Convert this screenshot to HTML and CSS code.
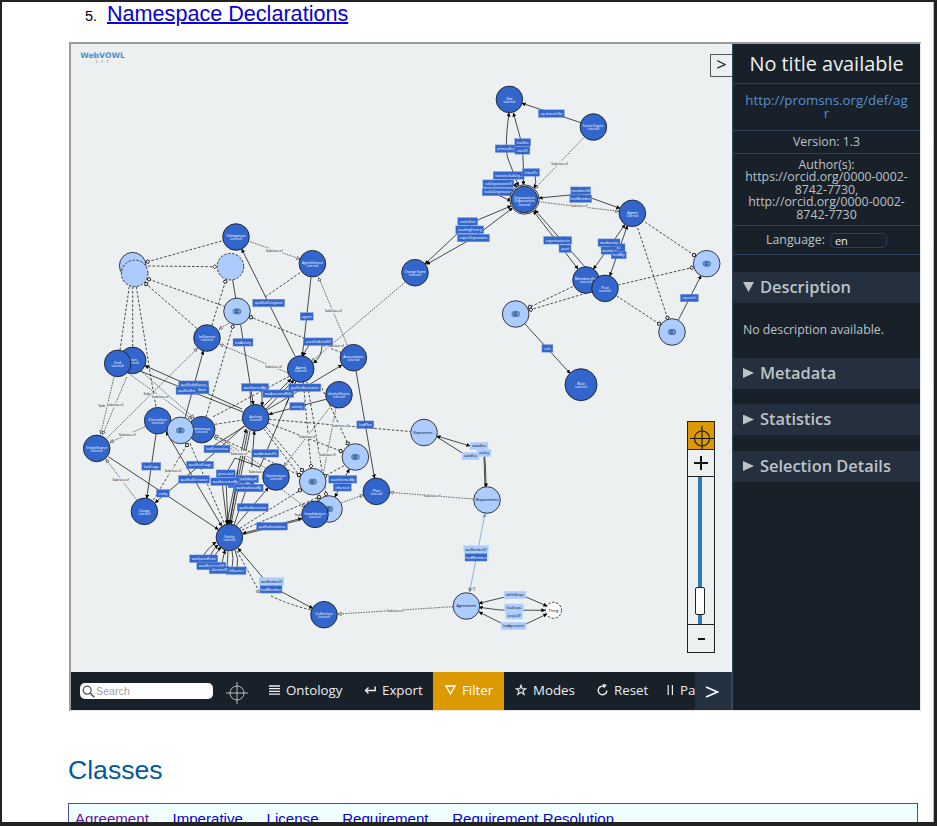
FILE: index.html
```html
<!DOCTYPE html>
<html lang="en">
<head>
<meta charset="utf-8">
<title>Agreements Ontology</title>
<link rel="stylesheet" href="styles.css">
</head>
<body>
<main class="page">
  <div class="toc"><span>5.</span><a href="#ns">Namespace Declarations</a></div>
  <div class="frame">
    <div class="left">
      <section class="canvas">
        <svg id="graph" class="graph" viewBox="71 44 662 628" width="662" height="628"></svg>
        <div class="logo"><b>WebVOWL</b><small>1.1.7</small></div>
        <button class="collapse">&gt;</button>
        <div class="zoom">
          <div class="center"><svg width="27" height="28" viewBox="0 0 27 28"><g fill="none" stroke="#111" stroke-width="1.1"><circle cx="15" cy="16.5" r="7.5"/><path d="M15 4V28M3 16.5H27"/></g></svg></div>
          <div class="step"><svg width="14" height="14" viewBox="0 0 14 14"><path d="M7 0V14M0 7H14" stroke="#111" stroke-width="2"/></svg></div>
          <div class="track"><i class="thumb"></i></div>
          <div class="step last"><svg width="14" height="14" viewBox="0 0 14 14"><path d="M4 7H11" stroke="#111" stroke-width="2"/></svg></div>
        </div>
      </section>
      <nav class="menu">
        <div class="search"><svg width="13" height="13" viewBox="0 0 13 13"><g fill="none" stroke="#555" stroke-width="1.2"><circle cx="5.2" cy="5.2" r="4"/><path d="M8.2 8.2L12.3 12.3" stroke-width="1.6"/></g></svg><span>Search</span></div>
        <svg class="cross" width="22" height="22" viewBox="0 0 22 22"><g fill="none" stroke="#b9bdc1" stroke-width="1"><circle cx="11" cy="11" r="7"/><path d="M11 0V22M0 11H22"/></g></svg>
        <a class="item ontology"><svg width="11" height="10" viewBox="0 0 11 10"><path d="M0 1H11M0 3.7H11M0 6.4H11M0 9.1H11" stroke="#eee" stroke-width="1.3"/></svg>Ontology</a>
        <a class="item export"><svg width="12" height="10" viewBox="0 0 12 10"><path d="M11.2 1.5V5.5H1.5M4.5 2.5L1.5 5.5L4.5 8.5" fill="none" stroke="#eee" stroke-width="1.4"/></svg>Export</a>
        <a class="item filter"><svg width="11" height="10" viewBox="0 0 11 10"><path d="M1 1H10L5.5 8.8Z" fill="none" stroke="#fff" stroke-width="1.4"/></svg>Filter</a>
        <a class="item modes"><svg width="12" height="12" viewBox="0 0 12 12"><path d="M6 1.2L7.2 4.7H10.9L8 6.9L9.1 10.5L6 8.4L2.9 10.5L4 6.9L1.1 4.7H4.8Z" fill="none" stroke="#eee" stroke-width="1.1"/></svg>Modes</a>
        <a class="item reset"><svg width="11" height="12" viewBox="0 0 11 12"><path d="M6.5 2.3A4.3 4.3 0 1 0 9.8 6.4" fill="none" stroke="#eee" stroke-width="1.4"/><path d="M5.4 0L9.8 .8L7 4.6Z" fill="#eee"/></svg>Reset</a>
        <a class="item pause"><svg width="7" height="10" viewBox="0 0 7 10"><path d="M1.2 0V10M5.4 0V10" stroke="#eee" stroke-width="1.2"/></svg>Pause</a>
        <a class="more"><svg width="14" height="14" viewBox="0 0 14 14"><path d="M1 2L12.5 7L1 12" fill="none" stroke="#fff" stroke-width="1.8"/></svg></a>
      </nav>
    </div>
    <aside class="side">
      <h1>No title available</h1>
      <div class="row iri"><a>http://promsns.org/def/ag<br>r</a></div>
      <div class="row version">Version: 1.3</div>
      <div class="row authors">Author(s):<br>https://orcid.org/0000-0002-<br>8742-7730,<br>http://orcid.org/0000-0002-<br>8742-7730</div>
      <div class="row language">Language:<span class="select">en</span></div>
      <h2 class="first"><i class="tri open"></i><span>Description</span></h2>
      <p>No description available.</p>
      <h2><i class="tri"></i><span>Metadata</span></h2>
      <h2><i class="tri"></i><span>Statistics</span></h2>
      <h2><i class="tri"></i><span>Selection Details</span></h2>
    </aside>
  </div>
  <h3 class="classes">Classes</h3>
  <div class="links"><a class="visited">Agreement</a><a>Imperative</a><a>License</a><a>Requirement</a><a>Requirement Resolution</a></div>
</main>
<script src="graph.js"></script>
</body>
</html>
```
FILE: styles.css
```css
* { box-sizing: border-box; }
body { margin: 0; background: #222; font-family: "Liberation Sans", sans-serif; }
.page { margin: 2px 0 0 2px; width: 932px; height: 820px; background: #fff; overflow: hidden; border-right: 1px solid #bbb; }
.toc { padding-left: 83px; height: 40px; display: flex; align-items: baseline; font-size: 14.5px; line-height: 24px; }
.toc span { width: 22px; }
.toc a { font-size: 21.6px; color: #0a00d4; text-decoration: underline; text-decoration-thickness: 1.5px; text-underline-offset: 1px; }
.frame { margin-left: 67px; width: 852px; height: 669px; display: flex; border: 2px solid; border-color: #9b9b9b #e8e8e8 #e8e8e8 #9b9b9b; border-right-width: 1px; border-bottom-width: 1px; font-family: "Open Sans", sans-serif; }
.left { flex: none; width: 661px; display: flex; flex-direction: column; overflow: hidden; }
.canvas { position: relative; height: 628px; background: #ecf0f1; }
.graph { display: block; }
.graph text { text-anchor: middle; font-family: "Open Sans", sans-serif; }
.logo { position: absolute; left: 9px; top: 7px; width: 45px; text-align: center; font-size: 7.7px; line-height: 9px; color: #4a90cc; letter-spacing: 0; font-family: "DejaVu Sans", sans-serif; }
.logo b, .logo small { display: block; }
.logo small { font-size: 4px; line-height: 4px; color: #888; letter-spacing: .8px; }
.collapse { position: absolute; right: 0; top: 10px; width: 22px; height: 23px; padding: 0 0 3px; border: 1px solid #555; border-right: 0; background: #ecf0f1; font: 18px/18px "Open Sans", sans-serif; color: #111; }
.zoom { position: absolute; left: 616px; top: 377px; width: 28px; height: 232px; border: 1px solid #222; border-width: 1px 1.5px; display: flex; flex-direction: column; }
.center { height: 28px; background: #dd9900; border-bottom: 1px solid #222; }
.center svg { display: block; overflow: visible; }
.center svg, .step svg { margin-left: -1px; }
.step { height: 27px; display: flex; align-items: center; justify-content: center; border-bottom: 1px solid #222; }
.step.last { border-top: 1px solid #222; border-bottom: 0; height: 28px; }
.track { position: relative; flex: 1; background: linear-gradient(#2f79b5, #2f79b5) 10px 0 / 4px 100% no-repeat; }
.thumb { position: absolute; left: 7px; top: 110px; width: 10px; height: 28px; border: 1px solid #222; border-radius: 2px; background: #fff; }
.menu { height: 38px; display: flex; align-items: center; background: #18202a; color: #eee; overflow: hidden; position: relative; }
.search { flex: none; width: 133px; height: 16px; margin-left: 9px; padding-left: 2px; border-radius: 5px; background: #fff; display: flex; align-items: center; gap: 1px; font: 10.7px "Liberation Sans", sans-serif; color: #a0a0a0; }
.cross { flex: none; margin: 3px 0 0 13px; }
.item { flex: none; height: 38px; display: flex; align-items: center; gap: 6px; padding-bottom: 2px; font-size: 13.3px; white-space: nowrap; }
.ontology { margin-left: 21px; width: 95px; }
.export { width: 69px; }
.filter { width: 71px; padding-left: 12px; background: #dd9900; color: #fff; }
.modes { width: 93px; padding-left: 11px; }
.reset { width: 70px; }
.more { position: absolute; right: 0; top: 0; width: 37px; height: 38px; background: #243140; border-right: 1px solid #34495e; padding: 10px 0 0 10px; }
.side { flex: 1; background: #18202a; color: #bdc3c7; font-size: 13.3px; border-left: 1px solid #34495e; min-width: 0; }
.side h1 { margin: 0; height: 40px; border-bottom: 1px solid #2c4058; font-size: 19.9px; line-height: 39px; font-weight: 400; text-align: center; color: #ecf0f1; }
.row { border-bottom: 1px solid #2c4058; text-align: center; line-height: 12.4px; }
.iri { height: 47px; padding-top: 10px; line-height: 13.4px; color: #5a90c8; }
.version { height: 23px; line-height: 22px; font-size: 12.35px; }
.authors { height: 72px; padding-top: 5px; font-size: 12.35px; }
.language { height: 29px; display: flex; align-items: center; justify-content: center; gap: 5px; font-size: 12.35px; }
.select { width: 57px; height: 15px; border: 1px solid #2c4058; border-radius: 5px; text-align: left; padding-left: 4px; font: 11px/13px "Open Sans", sans-serif; color: #ecf0f1; }
.side h2 { margin: 0 0 15.5px; height: 31px; background: #24303d; padding-left: 10px; display: flex; align-items: center; gap: 6px; font-size: 16.4px; font-weight: 600; }
.side h2 span { padding-bottom: 2px; }
.side h2.first { margin: 16.5px 0 0; }
.side p { margin: 0; height: 55px; padding-left: 10px; line-height: 54px; font-size: 12.3px; }
.tri { width: 11px; height: 10px; background: #bdc3c7; clip-path: polygon(0 0, 100% 50%, 0 100%); }
.tri.open { clip-path: polygon(0 0, 100% 0, 50% 100%); }
.classes { margin: 42px 0 0 66px; font-size: 26.6px; line-height: 34px; font-weight: 400; color: #005a9c; }
.links { margin: 16px 0 0 66px; width: 850px; height: 60px; border: 1px solid #4a4aa8; background: #f0ffff; display: flex; gap: 23.6px; padding: 6px 0 0 6px; font-size: 15.1px; line-height: 18px; color: #0a00c8; }
.visited { color: #6a0d9b; }
```
FILE: graph.js
```js
const out = [];
const marks = `<defs>
<marker id="a" viewBox="0 0 10 10" refX="9" refY="5" markerWidth="4" markerHeight="4" markerUnits="userSpaceOnUse" orient="auto-start-reverse"><path d="M0 0L10 5L0 10Z" fill="#000"/></marker>
<marker id="b" viewBox="0 0 10 10" refX="9" refY="5" markerWidth="4" markerHeight="4" markerUnits="userSpaceOnUse" orient="auto-start-reverse"><path d="M0 0L10 5L0 10Z" fill="#6a9fd8"/></marker>
<marker id="t" viewBox="0 0 10 10" refX="9" refY="5" markerWidth="4" markerHeight="4" markerUnits="userSpaceOnUse" orient="auto"><path d="M1 1L9 5L1 9Z" fill="#fff" stroke="#333" stroke-width="1.5"/></marker>
<marker id="o" viewBox="0 0 10 10" refX="5" refY="5" markerWidth="5" markerHeight="5" markerUnits="userSpaceOnUse" orient="auto"><path d="M1 5L5 1L9 5L5 9Z" fill="#fff" stroke="#222" stroke-width="1.8"/></marker>
</defs>`;

// kind: s = arrow, ss = arrow on both ends, d = dashed disjoint/set, t = subclass, n = plain line
const edges = [
['s','581 122.7 522 103.3'],['t','583.4 138 535 188.3'],['ss','M509 113Q504 150 508.5 160L518.4 186'],['ss','M513.4 113L520 137Q524 150 523.4 185'],
['s','M535 176Q537 182 534 188'],['s','M498 195L511 201'],['s','M508 179L517 187'],
['ss','M539 198L580 194L620 208.3'],['t','537.7 201.7 619 211.3'],
['ss','M425 264L458 233L480 219L511 206'],['ss','M426.7 264.3L473 238L512.5 208'],
['ss','533.4 211 578 269'],['s','585 267 535 210'],['ss','625 224.5 593.5 269'],['ss','627.4 225.7 609.8 276'],
['d','645 222 694 255'],['d','637.7 228 667.4 317.7'],['d','618 285 691.7 267.7'],['d','616.7 296 659 323.7'],
['s','678.4 320 701 275.7'],['d','572.7 286.7 530 307'],['d','586.7 293 530.7 309.7'],['s','525 324 570 373.3'],['t','405 282.3 311.5 361.5'],
['d','221.7 241 147.7 261.7'],['d','148 266 214.7 266.7'],['d','225.7 306.7 149 279.3'],['d','196.7 328.3 146.3 284'],
['p','129.3 286.7 120 350'],['p','132.7 286.7 132.7 347'],['p','M136.3 286.7L151.3 380L156 407'],['n','232.7 280 235.7 298'],
['d','211.7 325.7 225.3 281.7'],['t','231 322 219 329.3'],['d','206 417 232.7 326.7'],['s','185 418 203.3 351'],['t','107 438 197.3 348.3'],['t','288 373 220 344.3'],
['s','242 409 145 365.7'],['n','M140 371L243 412'],
['t','250 241.7 300 259'],['s','295 356 241.7 249'],['p','M300 272.7L265 297'],['s','311 277.3 302.3 356'],['t','347.3 345 318.7 277.7'],['d','341.7 352.7 251 317.3'],
['s','240.7 325 253.3 404.5'],['s','M310 344Q305 350 303.3 356'],['s','M322 345Q322 357 313.5 363'],
['s','263 407 291 379'],['s','266 409 294 380'],['s','M266.7 410L342 365'],['n','M286 405L296 381'],['s','M261.7 390L262.3 406'],['n','M250 391L251 405'],
['s','356 371 374.5 478'],['s','326 399.3 269 414.3'],['p','269 419.3 410 431.5'],['d','268 423 340.7 451'],['d','266 427 302 470'],['d','220 438 299 475'],['d','264 429 299 475'],
['d','303.3 382 311 466'],['d','307 382 326 494'],['d','320 384 347.7 443.3'],['t','331 406 284 466'],['t','336 408 318 501'],['d','344 465.7 325 476'],['ss','349.3 469 335 497'],
['t','341.7 502.7 363.3 495'],['t','281.7 489.3 305 507'],['d','240 528.3 300 490.3'],['d','242 530 319 497'],['ss','242.7 533.3 301.7 518.3'],['n','243 534.5 302 519.5'],
['s','235 526.7 268.3 487.7'],['n','M260 467L296 381'],['s','M251.7 467L254.3 431'],['n','235 458 260 467'],
['s','M222 482L227 524'],['s','M226 482L228 524'],['s','250 431 231 524'],['s','248 430 229 524'],['ss','246 429 226.7 524'],['n','M247 487L234 525'],['n','M238 470L230 524'],
['n','M245 426L207 450'],['n','M235 458L226 474'],
['t','114 377 100.7 434'],['t','126.7 377 102.7 434.6'],['t','145 426.7 110 442.3'],['t','136.7 500 106 459.3'],['s','108.3 456.7 218.3 529.5'],['s','156 434 146.7 498.3'],
['s','M244 426L212 455L155 502.7'],['ss','166 431.7 221.7 526'],['p','190 443.3 225 525'],['d','153.3 500 187 445'],['t','128 373 191.7 419'],['t','141 371 194 418'],
['p','M213.3 416.7L290 376'],['p','215 424.3 243 420'],['t','M262 470L214 437'],['t','M265 468L215 435'],
['s','M203 556Q207 549 216 542'],['s','M209 563Q210 552 218 545'],['s','M213 563Q214 554 221 547'],['s','M221 567L225 550'],['n','M227 568L228 551'],['n','M232 568Q234 558 232 551'],['n','M237 568Q239 558 235 550'],
['ss','M238 548.3L264 579L282 592L312.7 608.3'],['p','M237 551L259 591M271 596Q290 605 311 610'],['t','453 606.7 338 614'],
['b','469.6 592 485 513.5'],['ss','M479 603.3L505 597H526L547 606'],['ss','M479 607.3L500 610L545 610.3'],['ss','M479 612L503 624H526L547 614'],
['ss','M437 436L470 446'],['n','437 437 464 454'],['s','M484 449Q486 465 486 487'],['n','484 457 485 487'],['t','473 499 390 492.3']
];
edges.forEach(([k, p]) => {
  const d = p[0] === 'M' ? p : 'M' + p;
  const stroke = k === 'b' ? '#6a9fd8' : '#111';
  const width = k === 't' ? .6 : .75;
  const dash = k === 't' ? '1.6 1' : (k === 'd' || k === 'p') ? '2.6 1.8' : 'none';
  let m = '';
  if (k[0] === 's') m = 'marker-end="url(#a)"';
  if (k === 'ss') m += ' marker-start="url(#a)"';
  if (k === 'b') m = 'marker-end="url(#b)" marker-start="url(#b)"';
  if (k === 'd') m = 'marker-end="url(#o)"';
  if (k === 't') m = 'marker-end="url(#t)"';
  out.push(`<path d="${d}" fill="none" stroke="${stroke}" stroke-width="${width}" stroke-dasharray="${dash}" ${m}/>`);
});

// subclass captions
[[559.5,163.3],[579,206],[335.7,345.7],[274.3,250.7],[333.3,311],[273.4,366.4],[307.3,436.3],[327.3,454.7],[340,425.3],[239,453.3],[257,472],[115,404.7],[127.3,434.7],[120.7,480],[173,470.7],[160,396.7],[432,496],[395,610.7]]
  .forEach(([x, y]) => out.push(`<rect x="${x-8.5}" y="${y-2.5}" width="17" height="5" fill="#ecf0f1"/><text x="${x}" y="${y+1.2}" font-size="3.7" textLength="16.5" lengthAdjust="spacingAndGlyphs" fill="#111">Subclass of</text>`));
[[101.7,405.7],[146.7,393.7],[298,515],[259,592]].forEach(([x, y]) => out.push(`<text x="${x}" y="${y+1.2}" font-size="3.7" fill="#111">Sub</text>`));
out.push('<text x="472" y="590" font-size="3.6">[&gt;1]</text>');

// property labels: x, y, width, text, light
[[551.4,113.6,26,'reg. domestic/Site'],[505.7,148.7,21,'primarySite'],[522.7,142.4,16,'hasSite'],[522.4,150.4,15,'siteOf'],[508.7,175.4,31,'transitiveSubOrg...'],[531,172.4,17,'linkedTo'],[498.4,183.7,31,'subOrganizationOf'],[497.7,192,31,'hasSubOrganization'],
[580.7,190.7,20,'memberOf'],[580.7,198.7,22,'hasMember'],[467.7,221.4,20,'resultedFrom'],[469.7,229.7,28,'resultingFrom   g'],[473.4,238,32,'originalOrganization'],[557.7,240.3,28,'organization    in'],[565,248.7,12,'post'],
[617,247.5,16,'role'],[609,250.5,16,'member'],[609,242.7,22,'membership'],[618.7,255,15,'heldBy'],[689.4,298,18,'reportsTo'],[547.4,348.4,11,'role'],
[268.7,303,32,'qualifiedDelegation'],[306.7,316.4,13,'agent'],[318.3,341.7,29,'actedOnBehalfOf'],[243,342.3,20,'hadActivity'],[255,387.3,27,'wasStartedBy'],[304.7,387.7,32,'qualifiedAssociation'],[278.3,393.7,31,'wasAssociatedWith'],[297.3,406.3,15,'activity'],[365.3,424.7,17,'hadPlan'],
[193.7,384.7,30,'qualifiedInfluence'],[187,390.7,22,'qualifiedEnd'],[202,390,14,'Start'],[217,449,26,'hadGeneration'],[200,465,27,'qualifiedUsage'],[194,479.3,31,'qualifiedDerivation'],[151.3,466.3,19,'hadUsage'],[163,493.3,13,'entity'],
[265.3,453.3,27,'wasAttributedTo'],[225.7,473.7,19,'generated'],[247,479,23,'invalidated'],[241,484,26,'wasUsedBy'],[225.3,481.7,29,'wasGeneratedBy'],[248.7,488,29,'wasInvalidatedBy'],[342.7,479.3,28,'wasInformedBy'],[342.3,487.3,18,'influenced'],
[252.7,507.3,31,'qualifiedGeneration'],[272,526.3,31,'qualifiedInvalidation'],[203.7,558.7,28,'wasQuotedFrom'],[211.3,566,29,'wasRevisionOf'],[236,570.7,20,'influence'],[219.3,570,20,'alternateOf'],
[271.5,581.3,25,'wasMemberOf',1],[271,589.3,22,'hadMember'],[476,549.3,25,'wasMemberOf',1],[476,557.3,22,'hadMember'],[484,453,14,'policy',1],[479,446,18,'satisfies',1],[470.5,456,17,'satisfies',1],
[515,595,22,'withinScope',1],[514,607.7,19,'hasScope',1],[514,615.3,17,'scopeOf',1],[513.5,626,25,'hasAgreement',1]]
  .forEach(([x, y, w, s, l]) => out.push(`<rect x="${x-w/2}" y="${y-3.8}" width="${w}" height="7.6" fill="${l ? '#acccff' : '#3366cc'}" stroke="${l ? '#c2d9fb' : '#7f9fdd'}" stroke-width=".4"/><text x="${x}" y="${y+1.3}" font-size="3.7" ${s.length * 2.15 > w - 2 ? `textLength="${w-4}" lengthAdjust="spacingAndGlyphs"` : ''} fill="${l ? '#000' : '#fff'}">${s}</text>`));

// classes: x, y, type (b = external, l = local, e = equivalent set, d = dashed), text, radius
[[509.4,99.4,'b','Site'],[593.4,127,'b','Formal Organiz.'],[524.4,199.5,'r','Organization'],[632.4,213.3,'b','Agent'],[706.7,263.7,'e'],[415,272.7,'b','Change Event'],[586,280,'b','Membership'],[605,288.4,'b','Post'],[515.7,314,'e'],[672,332,'e'],[581,384.7,'b','Role',16],
[132.7,265.7,'l',''],[134.7,273.4,'d'],[236,237,'b','Delegation'],[230.4,266.7,'d'],[237,311.4,'e'],[207,338,'b','Influence'],[132.7,360.4,'b','Start'],[117.7,363.4,'b','End'],
[312.4,263.7,'b','AgentInfluence'],[300.7,369,'b','Agent'],[353.4,357.7,'b','Association'],[339,394.7,'b','ActivityInfluence'],[157.7,420.7,'b','Derivation'],[201.7,429.7,'b','Instantaneous...'],[180.4,430.4,'e'],[96.7,448.4,'b','EntityInfluence'],[144.4,511.4,'b','Usage'],
[255.7,417.7,'b','Activity'],[355.4,457,'e'],[312.7,481.7,'e'],[329,509,'e'],[276,477,'b','Generation'],[315,514.4,'b','Invalidation'],[376.4,491.4,'b','Plan'],[229.4,537.4,'b','Entity'],[324,614.7,'b','Collection'],
[466.4,606,'l','Agreement'],[424,432.5,'l','Requirement...'],[487,500,'l','Requirement'],[553.5,610.3,'w','Thing',8]]
  .forEach(([x, y, k, s, r = 13.3]) => {
    const fill = k === 'b' || k === 'r' ? '#3366cc' : k === 'w' ? '#fff' : '#acccff';
    if (k === 'r') out.push(`<circle cx="${x}" cy="${y}" r="14.7" fill="#ecf0f1" stroke="#111" stroke-width=".8"/>`);
    out.push(`<circle cx="${x}" cy="${y}" r="${r}" fill="${fill}" stroke="#111" stroke-width=".8" ${k === 'd' || k === 'w' ? 'stroke-dasharray="2.5 1.5"' : ''}/>`);
    if (k === 'e') out.push(`<g fill="#6799cf" stroke="#2c5581" stroke-width=".5"><circle cx="${x-1.2}" cy="${y}" r="2.7"/><circle cx="${x+1.2}" cy="${y}" r="2.7"/></g><path d="M${x-1.2} ${y-1}H${x+1.2}M${x-1.2} ${y+1}H${x+1.2}" stroke="#123" stroke-width=".6"/>`);
    if (s) {
      const blue = fill === '#3366cc';
      const long = s.length > 11 ? 'textLength="21" lengthAdjust="spacingAndGlyphs"' : '';
      out.push(`<text x="${x}" y="${y + (k === 'r' ? -1 : blue ? .2 : 1.2)}" font-size="3.8" ${long} fill="${blue ? '#fff' : '#000'}">${s}</text>`);
      if (k === 'r') out.push(`<text x="${x}" y="${y+2.6}" font-size="3.4" fill="#fff">Organisation</text>`);
      if (blue) out.push(`<text x="${x}" y="${y + (k === 'r' ? 6 : 3.4)}" font-size="2.7" fill="#fff">(external)</text>`);
    }
  });
document.getElementById('graph').innerHTML = marks + out.join('');
```
